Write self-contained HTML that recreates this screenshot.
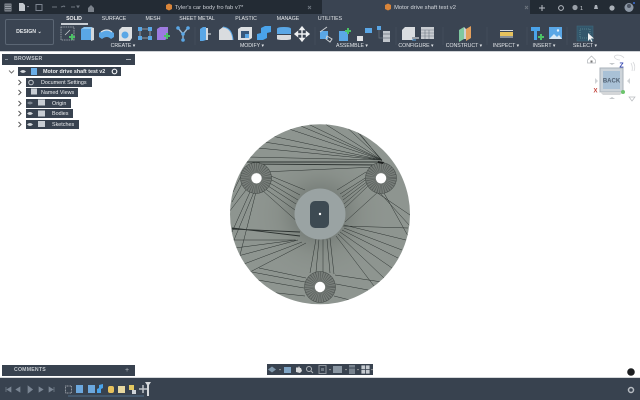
<!DOCTYPE html>
<html><head><meta charset="utf-8"><style>
html,body{margin:0;padding:0;width:640px;height:400px;overflow:hidden;background:#fff;font-family:"Liberation Sans",sans-serif}
#w{position:absolute;left:0;top:0;width:640px;height:400px;filter:blur(.3px);overflow:hidden;background:#fff}
.a{position:absolute}
.t{position:absolute;white-space:nowrap;color:#e4e7ea;font-size:5.2px;line-height:6px;transform:translateX(-50%)}
.row{position:absolute;background:#38424f;color:#eceef0;font-size:5.4px;line-height:9px;height:9px;white-space:nowrap}
.row span{position:absolute;top:.5px}
svg{position:absolute;left:0;top:0}
</style></head><body><div id="w">
<div class="a" style="left:0;top:0;width:640px;height:14px;background:#232b34"></div>
<div class="a" style="left:322px;top:0;width:208px;height:14px;background:#3a4452"></div>
<div class="a" style="left:0;top:14px;width:640px;height:38px;background:#3a4452"></div>
<div class="a" style="left:0;top:51px;width:640px;height:1px;background:#cfd2d6"></div>
<div class="a" style="left:0;top:377px;width:640px;height:1px;background:#d5d8db"></div>
<div class="a" style="left:0;top:378px;width:640px;height:22px;background:#38424f"></div>
<div class="t" style="left:209px;top:5px;font-size:5.8px;color:#c8ccd2">Tyler's car body fro fab v7*</div>
<div class="t" style="left:425px;top:5px;font-size:5.8px;color:#d5d9de">Motor drive shaft test v2</div>
<div class="t" style="left:74px;top:16px;font-weight:bold;color:#eef0f2">SOLID</div>
<div class="t" style="left:114px;top:16px">SURFACE</div>
<div class="t" style="left:153px;top:16px">MESH</div>
<div class="t" style="left:197px;top:16px">SHEET METAL</div>
<div class="t" style="left:246px;top:16px">PLASTIC</div>
<div class="t" style="left:288px;top:16px">MANAGE</div>
<div class="t" style="left:330px;top:16px">UTILITIES</div>
<div class="a" style="left:61px;top:23px;width:27px;height:2px;background:#c9ced4"></div>
<div class="a" style="left:5px;top:19px;width:49px;height:26px;border:1px solid #5b6674;border-radius:2px;box-sizing:border-box"></div>
<div class="t" style="left:29px;top:29px;font-weight:bold">DESIGN ⌄</div>
<div class="t" style="left:123px;top:43px">CREATE ▾</div>
<div class="t" style="left:252px;top:43px">MODIFY ▾</div>
<div class="t" style="left:352px;top:43px">ASSEMBLE ▾</div>
<div class="t" style="left:416px;top:43px">CONFIGURE ▾</div>
<div class="t" style="left:464px;top:43px">CONSTRUCT ▾</div>
<div class="t" style="left:506px;top:43px">INSPECT ▾</div>
<div class="t" style="left:544px;top:43px">INSERT ▾</div>
<div class="t" style="left:585px;top:43px">SELECT ▾</div>

<svg width="640" height="400" viewBox="0 0 640 400">
<!-- top bar icons -->
<path d="M5 4h6v7H5zM7 4v7M9 4v7M5 6.300h6M5 8.600h6" fill="none" stroke="#aab0b8" stroke-width=".8"/>
<path d="M19 3h4l2 2v6h-6z" fill="#c4c9cf"/><path d="M27 6l2 0-1 1.500z" fill="#aab"/>
<rect x="36" y="4.500" width="6" height="6" fill="none" stroke="#7c8490"/>
<path d="M52 7h5M61 7l3-1 1 1M71 7h4M77 6l2 0-1 1.500z" stroke="#6c747e" fill="none"/>
<path d="M88 8l3-3 3 3v4h-6z" fill="#7b828b"/>
<path d="M166 5l3-1.500 3 1.500v4l-3 1.500-3-1.500z" fill="#d9853a"/>
<path d="M385 5l3-1.500 3 1.500v4l-3 1.500-3-1.500z" fill="#d9853a"/>
<path d="M308 6l3 3M311 6l-3 3" stroke="#6c747e" stroke-width=".9"/>
<path d="M525 6l3 3M528 6l-3 3" stroke="#6c747e" stroke-width=".9"/>
<path d="M542 5v6M539 8h6" stroke="#b8bdc4" stroke-width="1"/>
<circle cx="561" cy="8" r="2.400" fill="none" stroke="#b8bdc4" stroke-width="1"/>
<circle cx="575" cy="7.500" r="2.600" fill="#9aa0a8"/><text x="580" y="10" font-size="5.500" fill="#ccd0d5" font-family="Liberation Sans">1</text>
<path d="M595 5h2l1 4h-4z" fill="#aab0b8"/><circle cx="612" cy="8" r="2.600" fill="#aab0b8"/>
<circle cx="629" cy="7.500" r="4.500" fill="#8c97a5"/><circle cx="629" cy="6" r="2" fill="#4a5260"/><circle cx="634" cy="3" r="1" fill="#3b6fd8"/>

<!-- create -->
<rect x="61" y="27" width="13" height="13" fill="none" stroke="#aeb4bb" stroke-width=".8" stroke-dasharray="1.500 .8"/>
<path d="M65 35l5-5" stroke="#d0d4d8" stroke-width=".7"/>
<path d="M69 37h6M72 34v6" stroke="#4cc266" stroke-width="2"/>
<path d="M81 29h10v11H81z" fill="#5aa7e6"/><path d="M91 27l3 1v12l-3 1z" fill="#d3d8dc"/><path d="M81 29l3-2h8l-1 2z" fill="#8cc5f0"/>
<path d="M99 33q7-6 15 0l0 4-3 2q-4-4-9 0l-3-2z" fill="#5aa7e6"/><path d="M101 32q6-4 11 0" stroke="#dfe3e6" fill="none" stroke-width="1.200"/>
<path d="M119 30l3-3h10v11l-2 3h-11z" fill="#dcdfe2"/><circle cx="125" cy="35" r="3.500" fill="#5aa7e6"/>
<path d="M140 29h10v9h-10z" fill="none" stroke="#aeb4bb" stroke-width=".8"/>
<g fill="#5aa7e6"><rect x="138" y="27" width="4" height="4"/><rect x="148" y="27" width="4" height="4"/><rect x="138" y="36" width="4" height="4"/><rect x="148" y="36" width="4" height="4"/></g>
<path d="M157 29l3-2h8v11l-3 2h-8z" fill="#9d7be0"/><path d="M164 36h6M167 33v6" stroke="#4cc266" stroke-width="2"/>
<path d="M178 28l5 6 5-6M183 34v6" stroke="#9ab6cf" stroke-width="1.400" fill="none"/>
<circle cx="178" cy="28" r="1.800" fill="#5aa7e6"/><circle cx="188" cy="28" r="1.800" fill="#5aa7e6"/><circle cx="183" cy="34" r="1.800" fill="#5aa7e6"/><circle cx="183" cy="40" r="1.800" fill="#5aa7e6"/>
<path d="M195 27v18M315 27v18M396 27v18M443 27v18M487 27v18M527 27v18M567 27v18" stroke="#4a5462" stroke-width=".6"/>
<!-- modify -->
<path d="M200 29l3-2h3v13l-3 1h-3z" fill="#5aa7e6"/><path d="M206 28h2v12h-2z" fill="#d7dbdf"/><path d="M208 34h3" stroke="#dfe3e6"/>
<path d="M219 30l4-3q9 1 10 13h-14z" fill="#d9dcdf"/><path d="M223 27q9 1 10 13" stroke="#5aa7e6" fill="none" stroke-width="1"/>
<path d="M238 29l3-2h11v11l-3 2h-11z" fill="#dcdfe2"/><rect x="241" y="31" width="8" height="7" fill="#39597c"/><rect x="245" y="34" width="4" height="4" fill="#5aa7e6"/>
<path d="M257 40v-6l4-1v-5l4-2h6v6l-4 1v5l-4 2z" fill="#4aa3ea"/>
<path d="M277 29q0-2 7-2t7 2v5h-14z" fill="#5aa7e6"/><path d="M277 35h14v4q0 1-7 1t-7-1z" fill="#d8dbde"/>
<path d="M302 27v14M295 34h14M302 27l-2 2.500h4zM302 41l-2-2.500h4zM295 34l2.500-2v4zM309 34l-2.500-2v4z" stroke="#eef0f2" stroke-width="1.400" fill="#eef0f2"/>
<!-- assemble -->
<path d="M320 31h8v8h-8z" fill="#5aa7e6"/><path d="M327 36l5 3-2 3-4-3z" fill="none" stroke="#cfd3d7"/><path d="M320 32l7-5" stroke="#cfd3d7"/>
<path d="M339 31h9v10h-9z" fill="#5aa7e6"/><path d="M345 31h6M348 28v6" stroke="#4cc266" stroke-width="2"/>
<path d="M357 36h6v5h-6z" fill="#dfe2e5"/><rect x="365" y="28" width="7" height="5" fill="#5aa7e6"/>
<rect x="377" y="26" width="4" height="4" fill="#5aa7e6"/><rect x="383" y="31" width="7" height="11" fill="#c0c5cb"/><path d="M379 30v8h4M383 34h7M383 38h7" stroke="#6a7480" fill="none" stroke-width=".7"/>
<!-- configure -->
<path d="M402 30l3-3h10v11l-3 2h-10z" fill="#dadde0"/><path d="M412 38h7" stroke="#9aa0a8" stroke-width="2"/><path d="M416 40h-4" stroke="#5aa7e6"/>
<rect x="421" y="27" width="13" height="12" fill="#c8ccd1"/><path d="M421 30h13M425 30v9M429 30v9M421 33h13M421 36h13" stroke="#6f7883" stroke-width=".6"/>
<!-- construct -->
<path d="M459 30l5-3v12l-5 3z" fill="#7fc8a0"/><path d="M466 29l5-3v12l-5 3z" fill="#e4a05c"/><path d="M464 27l2 2v10l-2 0z" fill="#cdd2d6"/>
<!-- inspect -->
<path d="M500 30.500h13M500 37h13" stroke="#d8dbde" stroke-width="1"/><rect x="500" y="32" width="13" height="4" fill="#e7c25c"/>
<!-- insert -->
<path d="M531 27h9v4h-3v9h-3v-9h-3z" fill="#4aa3ea"/><path d="M538 37h6M541 34v6" stroke="#4cc266" stroke-width="2"/>
<rect x="549" y="27" width="13" height="12" fill="#5aa7e6"/><path d="M549 39l5-5 3 3 2-2 3 4z" fill="#d8e8f4"/><circle cx="558" cy="30.500" r="1.200" fill="#e8f2fa"/>
<!-- select -->
<rect x="577" y="26" width="16" height="15" fill="#33566b" stroke="#3f6f80" stroke-width=".5"/><rect x="580" y="29" width="10" height="9" fill="none" stroke="#7aa" stroke-width=".6" stroke-dasharray="1 1"/>
<path d="M588 33l0 8 2-2 1.500 3 1-.5-1.500-3h3z" fill="#f2f3f4"/>

<!-- view cube -->
<path d="M591.500 56l-4 4v3h8v-3z" fill="none" stroke="#b0b4b8" stroke-width=".7"/><rect x="590.500" y="60.500" width="2" height="2" fill="#777"/>
<path d="M617 55q5 0 7 3M620 60q-3 0-5-2t2-3M633 62q3 4 1 9M631 63q2 4 1 8" stroke="#d4d6d9" fill="none" stroke-width=".8"/>
<rect x="600" y="68" width="23" height="24" fill="#cdd4da" stroke="#a9b2ba" stroke-width="1"/>
<rect x="603" y="71" width="17" height="18" fill="#a9c1d6"/>
<path d="M600 92h23l-3 3h-17z" fill="#d4d6d8"/>
<text x="611.500" y="82.500" font-size="6" font-weight="bold" fill="#4f5f70" text-anchor="middle" font-family="Liberation Sans">BACK</text>
<text x="621.500" y="67.500" font-size="7" font-weight="bold" fill="#3446b0" text-anchor="middle" font-family="Liberation Sans">Z</text>
<text x="595.500" y="92.500" font-size="6" font-weight="bold" fill="#c4443c" text-anchor="middle" font-family="Liberation Sans">X</text>
<circle cx="623" cy="92" r="2" fill="#6cc46c"/>
<path d="M609 63l3 2 3-2z" fill="#c4c7ca"/><path d="M595 78l3 3-3 3z" fill="#d0d3d6"/><path d="M630 78l-3 3 3 3z" fill="#d0d3d6"/><path d="M609 99l3-2 3 2z" fill="#c4c7ca"/>
<path d="M629 97h6l-3 4z" fill="none" stroke="#b8bbbf" stroke-width=".7"/>

<!-- disc -->
<circle cx="320" cy="214.300" r="90" fill="#8e9590"/>
<defs><radialGradient id="s" cx=".5" cy=".5" r=".5"><stop offset=".25" stop-color="#5f6662" stop-opacity=".6"/><stop offset=".6" stop-color="#70766f" stop-opacity=".18"/><stop offset="1" stop-color="#8d938e" stop-opacity="0"/></radialGradient>
<clipPath id="c"><circle cx="320" cy="214.300" r="90"/></clipPath></defs>
<circle cx="320" cy="214.300" r="70" fill="url(#s)"/>
<g clip-path="url(#c)" fill="none" stroke="#2c3230" stroke-width=".5">
<path d="M382 160L341 122M382 160L322 122M382 160L304 122M382 160L286 128M382 160L272 136M382 160L258 148M382 160L248 157M382 160L352 126M382 160L264 142M382 160L296 124"/>
<path d="M382 162L246 162M380 165L250 164" stroke-width=".9"/>
<path d="M376 167L262 172"/>
<path d="M382 161L360 134"/>
<path d="M268 178L300 195M268 182L298 200M268 186L296 204M264 188L295 210M262 190L300 224M250 192L232 232M246 190L229 212M254 192L234 240M256 192L240 255M266 174L305 190"/>
<path d="M370 175L340 194M368 178L342 197M368 181L343 200M367 184L344 204M368 186L345 208M376 192L410 215M380 193L410 226M384 193L408 236M378 192L345 222M366 172L337 190"/>
<path d="M343 226L408 228M344 225L406 240M344 228L402 250M342 230L398 258M340 232L392 268M338 234L384 278M336 236L374 286"/>
<path d="M300 236L232 228M232 229L300 232" stroke-width=".9"/>
<path d="M295 240L233 240M296 240L235 248M298 240L238 256M302 242L244 264M306 243L250 272"/>
<path d="M259 268L306 278M252 272L305 282M258 280L304 288M268 292L305 296"/>
<path d="M316 239L310 273M319 239L316 272M323 239L323 272M327 239L330 273M330 238L334 274"/>
<path d="M335 275L382 282M336 284L368 290M334 296L350 300"/>
<path d="M232 202L244 180M233 192L241 176"/>
</g>
<g fill="none" clip-path="url(#c)">
<circle cx="256" cy="178" r="15.500" fill="#787e7a"/><circle cx="381" cy="178" r="15.500" fill="#787e7a"/><circle cx="320" cy="287" r="15.500" fill="#787e7a"/>
<g stroke="#3f4542" opacity=".6">
<circle cx="256" cy="178" r="10.500" stroke-width="10" stroke-dasharray=".6 1.300"/>
<circle cx="381" cy="178" r="10.500" stroke-width="10" stroke-dasharray=".6 1.300"/>
<circle cx="320" cy="287" r="10.500" stroke-width="10" stroke-dasharray=".6 1.300"/>
</g>
<circle cx="256" cy="178" r="15.500" stroke="#3f4542" stroke-width=".5"/><circle cx="381" cy="178" r="15.500" stroke="#3f4542" stroke-width=".5"/><circle cx="320" cy="287" r="15.500" stroke="#3f4542" stroke-width=".5"/>
</g>
<path d="M378 161l6 1-1 2-5-1z" fill="#1c1f1e"/>
<circle cx="256.500" cy="178.300" r="5.200" fill="#fff"/><circle cx="381" cy="178.300" r="5.200" fill="#fff"/><circle cx="320" cy="287" r="5.200" fill="#fff"/>
<circle cx="320" cy="214" r="25.500" fill="#9aa3a3"/>
<rect x="310" y="201" width="19" height="27" rx="5" fill="#3d4a52"/>
<circle cx="320" cy="214" r="1.200" fill="#fff"/>

<!-- view bar -->
<rect x="267" y="364" width="106" height="11" fill="#38424f"/>
<path d="M268 369.500l4-3 4 3-4 3z" fill="#7f97ab"/><path d="M279 369l2 0-1 1.500z" fill="#aaa"/>
<rect x="284" y="367" width="7" height="6" fill="#7fa4c4"/>
<path d="M296 372v-4l1-1 1 1 1-2 1 2 1 0 1 3-2 2z" fill="#d7d9db"/>
<circle cx="309" cy="369" r="2.500" fill="none" stroke="#b0b5ba"/><path d="M311 371l2 2" stroke="#b0b5ba"/>
<rect x="319" y="365.500" width="7" height="8" fill="none" stroke="#8b929a"/><rect x="321" y="368" width="3" height="3" fill="#6c7681"/>
<rect x="333" y="366" width="9" height="7" fill="#8a96a2"/><rect x="349" y="365" width="6" height="9" fill="#77828d"/><path d="M349 368h6" stroke="#3a4452"/>
<path d="M361 365h9v9h-9zM365.500 365v9M361 369.500h9" fill="#c5cad0" stroke="#38424f" stroke-width=".8"/>
<path d="M329 369l2 0-1 1.500zM345 369l2 0-1 1.500zM357 369l2 0-1 1.500zM371 369l2 0-1 1.500z" fill="#aaa"/>

<!-- timeline -->
<path d="M6 386v5M11 386l-4 2.500 4 2.500zM20 386l-4 2.500 4 2.500zM28 385l4.500 3.500-4.500 3.500zM39 386l4 2.500-4 2.500zM49 386l4 2.500-4 2.500zM54 386v5" stroke="#7a8593" fill="#7a8593" stroke-width=".7" transform="translate(0,1)"/>
<rect x="65.500" y="386" width="6" height="7" fill="none" stroke="#b5bac0" stroke-width=".7" stroke-dasharray="1 .5"/>
<rect x="76" y="385" width="7" height="8" fill="#6ca8de"/><rect x="88" y="385" width="7" height="8" fill="#6ca8de"/>
<path d="M97 393v-4l2-1v-3l4-1v4l-2 1v4z" fill="#4aa3ea"/>
<rect x="108" y="386" width="6" height="7" rx="2" fill="#e8c25c"/>
<rect x="118" y="386" width="7" height="7" fill="#e7d8a0"/>
<rect x="129" y="385" width="5" height="5" fill="#e3c860"/><rect x="132" y="390" width="4" height="4" fill="#cfd3d7"/>
<path d="M143 385v8M139 389h8" stroke="#c0c5ca" stroke-width="1.500"/>
<path d="M68 396H144" stroke="#5a7f9e" stroke-width=".7" fill="none"/>
<path d="M145 382h6l-2 3v11h-2v-11z" fill="#d6d9dc"/>
<circle cx="631" cy="390" r="2.500" fill="none" stroke="#b7bcc2" stroke-width="1.500"/>
<circle cx="631" cy="372" r="3.800" fill="#1c1e20"/>
</svg>

<!-- browser -->
<div class="a" style="left:2px;top:54px;width:133px;height:11px;background:#38424f"></div>
<div class="a" style="left:5px;top:59px;width:3px;height:1px;background:#8a929c"></div>
<div class="a" style="left:14px;top:56px;font-size:5.2px;line-height:7px;color:#bfc4ca;font-weight:bold;letter-spacing:.2px">BROWSER</div>
<div class="a" style="left:126px;top:59px;width:5px;height:1px;background:#aab0b8"></div>

<div class="row" style="left:18px;top:67px;width:103px"><span style="left:25px;font-weight:bold">Motor drive shaft test v2</span></div>
<div class="row" style="left:26px;top:78px;width:66px"><span style="left:15px">Document Settings</span></div>
<div class="row" style="left:26px;top:88px;width:52px"><span style="left:15px">Named Views</span></div>
<div class="row" style="left:26px;top:99px;width:45px"><span style="left:26px">Origin</span></div>
<div class="row" style="left:26px;top:109px;width:47px"><span style="left:26px">Bodies</span></div>
<div class="row" style="left:26px;top:120px;width:53px"><span style="left:26px">Sketches</span></div>
<svg width="140" height="135" viewBox="0 0 140 135">
<path d="M9 70.500l2.500 2.500 2.500-2.500" stroke="#777" fill="none"/>
<path d="M18.500 80l2.500 2.500-2.500 2.500M18.500 90l2.500 2.500-2.500 2.500M18.500 101l2.500 2.500-2.500 2.500M18.500 111l2.500 2.500-2.500 2.500M18.500 122l2.500 2.500-2.500 2.500" stroke="#555" fill="none" stroke-width="1"/>
<path d="M20 71.500q3-3 6 0-3 3-6 0zM27 113.500q3-3 6 0-3 3-6 0zM27 124.500q3-3 6 0-3 3-6 0z" fill="#d5d9dd"/>
<path d="M27 103q3-3 6 0-3 3-6 0z" fill="#7d8691"/>
<path d="M31 68h6v7h-6z" fill="#6aaee8"/>
<circle cx="31" cy="82.500" r="2.300" fill="none" stroke="#c0c5ca" stroke-width="1"/>
<path d="M31 88.500h6v6h-6zM38 99.500h7v6h-7zM38 110.500h7v6h-7zM38 121h7v6h-7z" fill="#c8cdd3"/>
<circle cx="114.500" cy="71.500" r="2.300" fill="none" stroke="#eef0f2" stroke-width="1.200"/>
</svg>
<!-- comments -->
<div class="a" style="left:2px;top:365px;width:133px;height:11px;background:#38424f"></div>
<div class="a" style="left:14px;top:367px;font-size:5.2px;line-height:7px;color:#c4c9ce;font-weight:bold;letter-spacing:.2px">COMMENTS</div>
<div class="a" style="left:125px;top:367px;font-size:7px;line-height:7px;color:#b5bac0">+</div>
</div></body></html>
